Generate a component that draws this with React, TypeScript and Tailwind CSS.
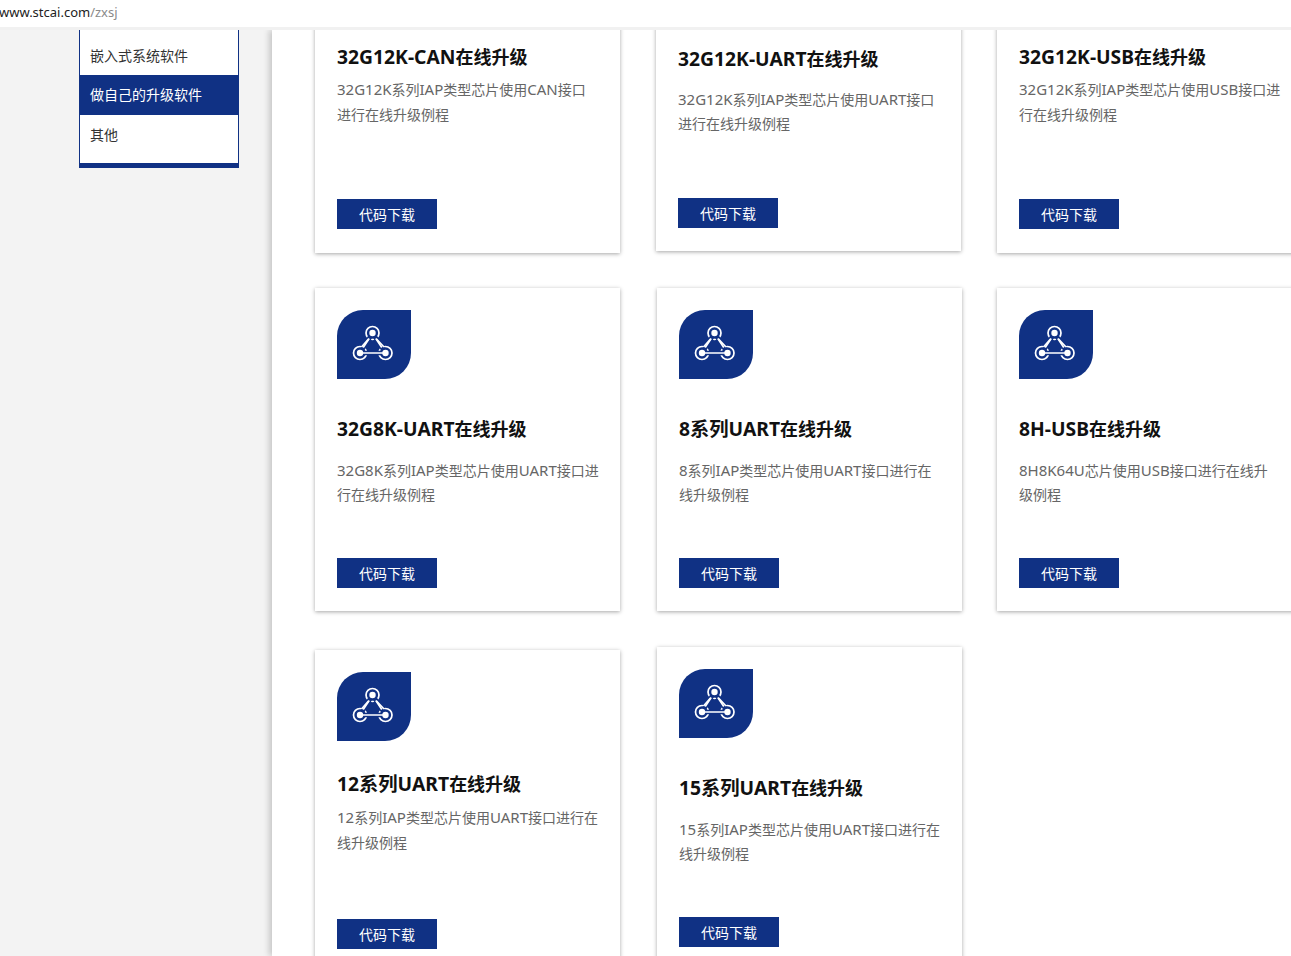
const font = { fontFamily: '"Noto Sans", "Noto Sans CJK SC", sans-serif' };

const NodesIcon = () => (
  <div className="flex h-[69px] w-[74px] items-center justify-center rounded-tl-[26px] rounded-br-[26px] bg-[#103184]">
    <svg width="74" height="69" viewBox="0 0 74 69" fill="none" stroke="#fff" strokeWidth="1.7">
      <circle cx="35.5" cy="23" r="6.5" />
      <circle cx="23" cy="43" r="6.5" />
      <circle cx="48.5" cy="43" r="6.5" />
      <path d="M35.5 23 L23 43 H48.5 Z" stroke="#103184" strokeWidth="4.5" />
      <path d="M31.5 29 L24.5 37 M39.5 29 L47 37 M23 43 H48.5" />
      <path d="M32.2 28.5 L26.2 37.5 M38.8 28.5 L44.8 37.5" strokeWidth="1.7" />
      <circle cx="35.5" cy="23" r="3.2" fill="#fff" stroke="none" />
      <circle cx="23" cy="43" r="3.2" fill="#fff" stroke="none" />
      <circle cx="48.5" cy="43" r="3.2" fill="#fff" stroke="none" />
    </svg>
  </div>
);

const Download = ({ className }: { className: string }) => (
  <a className={`flex h-[30px] w-[100px] items-center justify-center bg-[#103184] text-[14px] text-white ${className}`}>代码下载</a>
);

const Sidebar = () => (
  <div className="w-[272px] shrink-0 pl-[79px]">
    <div className="w-[160px] border-x border-b-[5px] border-[#103184] bg-white text-[14px] text-[#333]">
      <div className="flex h-[45px] items-center pl-[10px] pt-[5px]">嵌入式系统软件</div>
      <div className="flex h-[40px] items-center bg-[#103184] pb-[2px] pl-[10px] text-white">做自己的升级软件</div>
      <div className="h-[48px] pl-[10px] pt-[10px] leading-[20px]">其他</div>
    </div>
  </div>
);

// latin runs sit a little larger than the chinese in the original
const Title = ({ className, latin, children }: { className: string; latin: string; children: string }) => (
  <h3 className={`text-[18px] leading-[26px] font-bold text-[#111] ${className}`}>
    <span className="text-[19.3px]">{latin}</span>
    {children}
  </h3>
);

const Desc = ({ className, children }: { className: string; children: string }) => (
  <p className={`w-[262px] text-[14px] text-[#666] ${className}`}>
    {children.split(/([A-Za-z0-9]+)/).map((part, i) =>
      i % 2 ? (
        <span key={i} className="text-[15px]">
          {part}
        </span>
      ) : (
        part
      ),
    )}
  </p>
);

const cardClass = "w-[305px] shrink-0 bg-white pl-[22px] shadow-[0_1px_4px_rgba(0,0,0,0.35)]";

export default function App() {
  return (
    <div className="flex h-[956px] w-full flex-col overflow-hidden bg-[#f3f3f3]" style={font}>
      <header className="relative z-10 h-[30px] shrink-0 border-b-[3px] border-[#f1f1f1] bg-white">
        <div className="-ml-[1px] text-[13px] leading-[25px] text-[#222]">
          www.stcai.com<span className="text-[#8a8a8a]">/zxsj</span>
        </div>
      </header>
      <div className="flex min-h-0 flex-1">
        <Sidebar />
        <main className="min-w-0 flex-1 bg-white pl-[43px] shadow-[-3px_0_6px_rgba(0,0,0,0.18)]">
          <div className="-mt-[6px] flex items-start">
            <div className={`${cardClass} mr-[36px] h-[229px] pt-[20px]`}>
              <Title className="" latin="32G12K-CAN">在线升级</Title>
              <Desc className="mt-[7px] leading-[25px]">32G12K系列IAP类型芯片使用CAN接口进行在线升级例程</Desc>
              <Download className="mt-[72px]" />
            </div>
            <div className={`${cardClass} mr-[36px] h-[227px] pt-[22px]`}>
              <Title className="" latin="32G12K-UART">在线升级</Title>
              <Desc className="mt-[15px] leading-[24px]">32G12K系列IAP类型芯片使用UART接口进行在线升级例程</Desc>
              <Download className="mt-[62px]" />
            </div>
            <div className={`${cardClass} h-[229px] !w-[320px] pt-[20px]`}>
              <Title className="" latin="32G12K-USB">在线升级</Title>
              <Desc className="mt-[7px] leading-[25px]">32G12K系列IAP类型芯片使用USB接口进行在线升级例程</Desc>
              <Download className="mt-[72px]" />
            </div>
          </div>
          <div className="mt-[35px] flex items-start">
            <div className={`${cardClass} mr-[37px] h-[323px] pt-[22px]`}>
              <NodesIcon />
              <Title className="mt-[37px]" latin="32G8K-UART">在线升级</Title>
              <Desc className="mt-[16px] leading-[24px]">32G8K系列IAP类型芯片使用UART接口进行在线升级例程</Desc>
              <Download className="mt-[51px]" />
            </div>
            <div className={`${cardClass} mr-[35px] h-[323px] pt-[22px]`}>
              <NodesIcon />
              <Title className="mt-[37px]" latin="8系列UART">在线升级</Title>
              <Desc className="mt-[16px] leading-[24px]">8系列IAP类型芯片使用UART接口进行在线升级例程</Desc>
              <Download className="mt-[51px]" />
            </div>
            <div className={`${cardClass} h-[323px] !w-[320px] pt-[22px]`}>
              <NodesIcon />
              <Title className="mt-[37px]" latin="8H-USB">在线升级</Title>
              <Desc className="mt-[16px] leading-[24px]">8H8K64U芯片使用USB接口进行在线升级例程</Desc>
              <Download className="mt-[51px]" />
            </div>
          </div>
          <div className="mt-[36px] flex items-start">
            <div className={`${cardClass} mr-[37px] mt-[3px] h-[340px] pt-[22px]`}>
              <NodesIcon />
              <Title className="mt-[30px]" latin="12系列UART">在线升级</Title>
              <Desc className="mt-[8px] leading-[25px]">12系列IAP类型芯片使用UART接口进行在线升级例程</Desc>
              <Download className="mt-[64px]" />
            </div>
            <div className={`${cardClass} h-[340px] pt-[22px]`}>
              <NodesIcon />
              <Title className="mt-[37px]" latin="15系列UART">在线升级</Title>
              <Desc className="mt-[16px] leading-[24px]">15系列IAP类型芯片使用UART接口进行在线升级例程</Desc>
              <Download className="mt-[51px]" />
            </div>
          </div>
        </main>
      </div>
    </div>
  );
}
